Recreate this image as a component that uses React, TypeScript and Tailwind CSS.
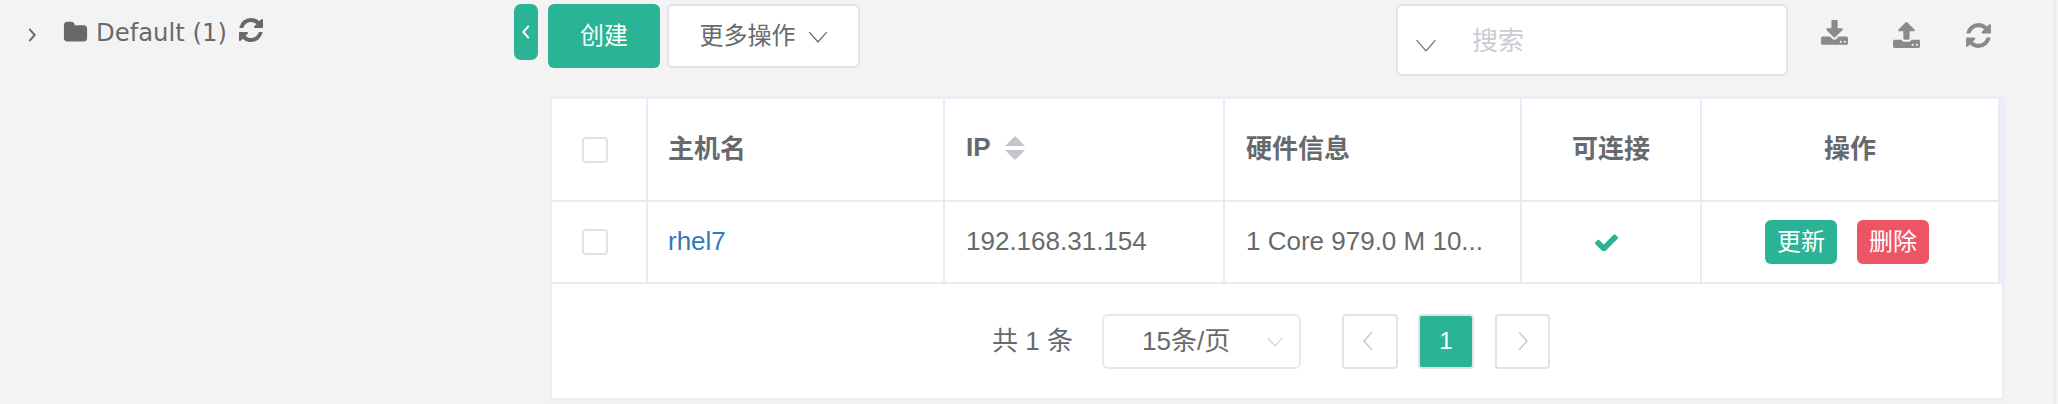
import React from "react";

const CJK = "font-['Liberation_Sans','Noto_Sans_CJK_SC',sans-serif]";

const REFRESH =
  "M1639 1056q0 5-1 7-64 268-268 434.5t-478 166.5q-146 0-282.5-55t-243.5-157l-129 129q-19 19-45 19t-45-19-19-45v-448q0-26 19-45t45-19h448q26 0 45 19t19 45-19 45l-137 137q71 66 161 102t187 36q134 0 250-65t186-179q11-17 53-117 8-23 30-23h192q13 0 22.5 9.5t9.5 22.5zm25-800v448q0 26-19 45t-45 19h-448q-26 0-45-19t-19-45 19-45l138-138q-148-137-349-137-134 0-250 65t-186 179q-11 17-53 117-8 23-30 23h-199q-13 0-22.5-9.5t-9.5-22.5v-7q65-268 270-434.5t480-166.5q146 0 284 55.5t245 156.5l130-129q19-19 45-19t45 19 19 45z";
const DOWNLOAD =
  "M1344 1344q0-26-19-45t-45-19-45 19-19 45 19 45 45 19 45-19 19-45zm256 0q0-26-19-45t-45-19-45 19-19 45 19 45 45 19 45-19 19-45zm128-224v320q0 40-28 68t-68 28h-1472q-40 0-68-28t-28-68v-320q0-40 28-68t68-28h465l135 136q58 56 136 56t136-56l136-136h464q40 0 68 28t28 68zm-325-569q17 41-14 70l-448 448q-18 19-45 19t-45-19l-448-448q-31-29-14-70 17-39 59-39h256v-448q0-26 19-45t45-19h256q26 0 45 19t19 45v448h256q42 0 59 39z";
const UPLOAD =
  "M1344 1472q0-26-19-45t-45-19-45 19-19 45 19 45 45 19 45-19 19-45zm256 0q0-26-19-45t-45-19-45 19-19 45 19 45 45 19 45-19 19-45zm128-224v320q0 40-28 68t-68 28h-1472q-40 0-68-28t-28-68v-320q0-40 28-68t68-28h427q21 56 70.5 92t110.5 36h256q61 0 110.5-36t70.5-92h427q40 0 68 28t28 68zm-325-648q-17 40-59 40h-256v448q0 26-19 45t-45 19h-256q-26 0-45-19t-19-45v-448h-256q-42 0-59-40-17-39 14-69l448-448q18-19 45-19t45 19l448 448q31 30 14 69z";
const FOLDER =
  "M1728 608v704q0 92-66 158t-158 66h-1216q-92 0-158-66t-66-158v-960q0-92 66-158t158-66h320q92 0 158 66t66 158v32h672q92 0 158 66t66 158z";
const CHECK =
  "M1671 566q0 40-28 68l-724 724-136 136q-28 28-68 28t-68-28l-136-136-362-362q-28-28-28-68t28-68l136-136q28-28 68-28t68 28l294 295 656-657q28-28 68-28t68 28l136 136q28 28 28 68z";

function Fa({ d, className, box = "0 0 1792 1792" }: { d: string; className: string; box?: string }) {
  return (
    <svg viewBox={box} fill="currentColor" className={className}>
      <path d={d} />
    </svg>
  );
}

function Chevron({ dir, className }: { dir: "left" | "right" | "down"; className: string }) {
  const d = dir === "left" ? "M8 1 L1 9 L8 17" : dir === "right" ? "M1 1 L8 9 L1 17" : "M1 1 L9 10 L17 1";
  const box = dir === "down" ? "0 0 18 11" : "0 0 9 18";
  return (
    <svg viewBox={box} fill="none" stroke="currentColor" className={className}>
      <path d={d} />
    </svg>
  );
}

function Box() {
  return <span className="block w-[26px] h-[26px] ml-[30px] rounded-[4px] border-2 border-[#dfe2ea] bg-white" />;
}

const th = "border-r-2 border-b-2 border-[#e9ebf2] h-[103px] text-[#676a6c] font-bold text-[26px] p-0";
const td = "border-r-2 border-b-2 border-[#e9ebf2] h-[82px] text-[#676a6c] text-[26px] p-0";

export default function App() {
  return (
    <div className={`${CJK} w-[2058px] h-[404px] overflow-hidden bg-[#f3f3f4] flex`}>
      <div className="w-[514px] shrink-0 flex items-start pl-[28px] text-[#676a6c]">
        <Chevron dir="right" className="w-[8px] h-[14px] mt-[28px] stroke-[2.5]" />
        <Fa d={FOLDER} className="w-[25px] h-[25px] ml-[27px] mt-[20px]" />
        <span className="ml-[8px] mt-[15px] text-[24.3px] leading-[36px] font-['DejaVu_Sans',sans-serif]">Default (1)</span>
        <Fa d={REFRESH} className="w-[28px] h-[28px] ml-[10px] mt-[16px]" />
      </div>

      <div className="w-[1542px] shrink-0 border-r-2 border-[#ebebec] pr-[50px]">
        <div className="flex items-start pt-[4px] h-[96px]">
          <button className="w-[24px] h-[56px] rounded-[7px] bg-[#2ab394] text-white flex items-center justify-center">
            <Chevron dir="left" className="w-[8px] h-[14px] stroke-[2.5]" />
          </button>
          <button className="ml-[10px] w-[112px] h-[64px] rounded-[6px] bg-[#2ab394] text-white text-[24px]">创建</button>
          <button className="ml-[7px] w-[193px] h-[64px] rounded-[6px] bg-white border-[2px] border-[#e2e4ea] text-[#676a6c] text-[24px] flex items-center justify-center gap-[12px]">
            更多操作
            <Chevron dir="down" className="w-[20px] h-[12px] stroke-[1.2] mt-[2px]" />
          </button>
          <div className="ml-[536px] w-[392px] h-[72px] rounded-[6px] bg-white border-[2px] border-[#e2e4ea] flex items-center">
            <Chevron dir="down" className="w-[22px] h-[13px] ml-[17px] mt-[10px] text-[#676a6c] stroke-[1]" />
            <span className="ml-[35px] mt-[2px] text-[26px] text-[#c9ccd3]">搜索</span>
          </div>
          <div className="ml-[32px] flex items-start text-[#8a8a8a] pt-[16px]">
            <Fa d={DOWNLOAD} className="w-[29px] h-[29px]" />
            <Fa d={UPLOAD} className="w-[29px] h-[29px] ml-[43px] mt-[1px]" />
            <Fa d={REFRESH} className="w-[29px] h-[29px] ml-[43px] mt-[1px]" />
          </div>
        </div>

        <div className="ml-[35px] w-[1456px] h-[305px] bg-white border-[3px] border-[#eceef5] rounded-[3px]">
          <table className="table-fixed w-[1453px] border-separate border-spacing-0 border-r-[5px] border-[#eceef5]">
            <colgroup>
              <col className="w-[96px]" />
              <col className="w-[297px]" />
              <col className="w-[280px]" />
              <col className="w-[297px]" />
              <col className="w-[180px]" />
              <col className="w-[298px]" />
            </colgroup>
            <thead>
              <tr>
                <th className={th}><Box /></th>
                <th className={`${th} text-left pl-[20px]`}>主机名</th>
                <th className={`${th} text-left pl-[21px]`}>
                  <span className="flex items-center gap-[14px] -mt-[4px]">
                    IP
                    <svg viewBox="0 0 20 24" className="w-[20px] h-[24px] text-[#c2c5ce]" fill="currentColor">
                      <path d="M10 0 L20 10 H0 Z M0 14 H20 L10 24 Z" />
                    </svg>
                  </span>
                </th>
                <th className={`${th} text-left pl-[21px]`}>硬件信息</th>
                <th className={`${th} text-center`}>可连接</th>
                <th className={`${th} text-center border-r-0`}>操作</th>
              </tr>
            </thead>
            <tbody>
              <tr>
                <td className={td}><Box /></td>
                <td className={`${td} pl-[20px] pb-[2px]`}>
                  <a className="text-[#337ab7]">rhel7</a>
                </td>
                <td className={`${td} pl-[21px] pb-[2px]`}>192.168.31.154</td>
                <td className={`${td} pl-[21px] pb-[2px]`}>1 Core 979.0 M 10...</td>
                <td className={td}>
                  <span className="block text-[#2ab394] ml-[73px]">
                    <Fa d={CHECK} box="121 340 1550 1082" className="w-[23px] h-[17px]" />
                  </span>
                </td>
                <td className={`${td} border-r-0`}>
                  <div className="flex items-center justify-center gap-[20px] pr-[6px]">
                    <button className="w-[72px] h-[44px] rounded-[6px] bg-[#2ab394] text-white text-[24px]">更新</button>
                    <button className="w-[72px] h-[44px] rounded-[6px] bg-[#ed5565] text-white text-[24px]">删除</button>
                  </div>
                </td>
              </tr>
            </tbody>
          </table>

          <div className="flex items-center h-[114px] pl-[440px] text-[#676a6c] text-[26px]">
            <span className="w-[110px]">共 1 条</span>
            <div className="w-[199px] h-[55px] rounded-[6px] border-[2px] border-[#e8e9ee] flex items-center pl-[38px]">
              <span>15条/页</span>
              <Chevron dir="down" className="w-[16px] h-[10px] ml-[37px] mt-[2px] text-[#c7c9d1] stroke-[1.2]" />
            </div>
            <button className="ml-[41px] w-[56px] h-[55px] rounded-[4px] border-[2px] border-[#dfe2ea] flex items-center justify-center">
              <Chevron dir="left" className="w-[10px] h-[20px] mr-[4px] text-[#c2c5ce] stroke-[1.3]" />
            </button>
            <button className="ml-[20px] w-[56px] h-[55px] rounded-[4px] border-[2px] border-[#dfe2ea] bg-[#2ab394] text-white text-[24px] flex items-center justify-center">
              1
            </button>
            <button className="ml-[21px] w-[55px] h-[55px] rounded-[4px] border-[2px] border-[#dfe2ea] flex items-center justify-center">
              <Chevron dir="right" className="w-[10px] h-[20px] text-[#c2c5ce] stroke-[1.3]" />
            </button>
          </div>
        </div>
      </div>
    </div>
  );
}
